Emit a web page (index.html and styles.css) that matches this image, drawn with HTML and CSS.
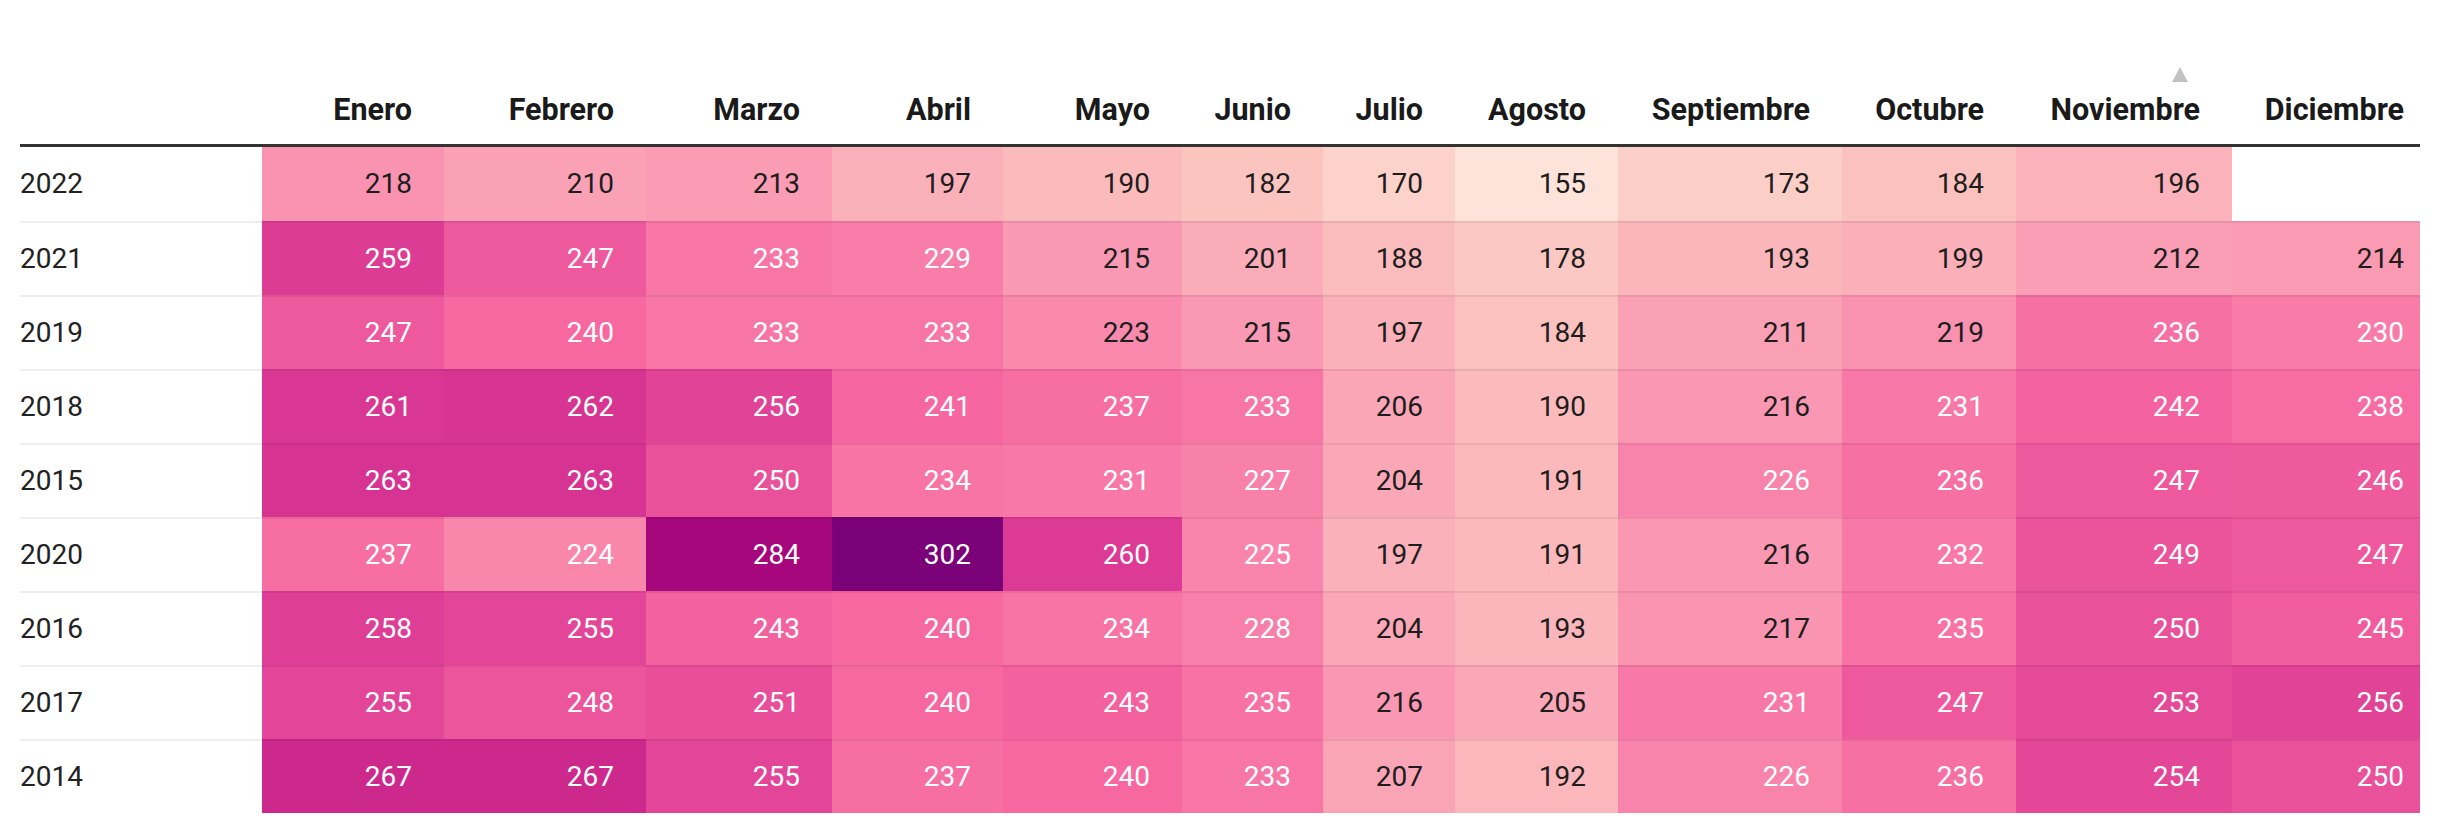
FILE: index.html
```html
<!DOCTYPE html>
<html lang="es">
<head>
<meta charset="utf-8">
<title>Tabla de calor</title>
<link rel="stylesheet" href="styles.css">
</head>
<body>
<div class="wrap">
  <table class="heat">
    <colgroup>
      <col class="c-year">
      <col class="c-ene">
      <col class="c-feb">
      <col class="c-mar">
      <col class="c-abr">
      <col class="c-may">
      <col class="c-jun">
      <col class="c-jul">
      <col class="c-ago">
      <col class="c-sep">
      <col class="c-oct">
      <col class="c-nov">
      <col class="c-dic">
    </colgroup>
    <thead>
      <tr>
        <th class="year"></th>
        <th>Enero</th>
        <th>Febrero</th>
        <th>Marzo</th>
        <th>Abril</th>
        <th>Mayo</th>
        <th>Junio</th>
        <th>Julio</th>
        <th>Agosto</th>
        <th>Septiembre</th>
        <th>Octubre</th>
        <th class="sorted">Noviembre<span class="sort-arrow"></span></th>
        <th>Diciembre</th>
      </tr>
    </thead>
    <tbody>
      <tr><td class="year">2022</td><td class="v">218</td><td class="v">210</td><td class="v">213</td><td class="v">197</td><td class="v">190</td><td class="v">182</td><td class="v">170</td><td class="v">155</td><td class="v">173</td><td class="v">184</td><td class="v">196</td><td class="v empty"></td></tr>
      <tr><td class="year">2021</td><td class="v">259</td><td class="v">247</td><td class="v">233</td><td class="v">229</td><td class="v">215</td><td class="v">201</td><td class="v">188</td><td class="v">178</td><td class="v">193</td><td class="v">199</td><td class="v">212</td><td class="v">214</td></tr>
      <tr><td class="year">2019</td><td class="v">247</td><td class="v">240</td><td class="v">233</td><td class="v">233</td><td class="v">223</td><td class="v">215</td><td class="v">197</td><td class="v">184</td><td class="v">211</td><td class="v">219</td><td class="v">236</td><td class="v">230</td></tr>
      <tr><td class="year">2018</td><td class="v">261</td><td class="v">262</td><td class="v">256</td><td class="v">241</td><td class="v">237</td><td class="v">233</td><td class="v">206</td><td class="v">190</td><td class="v">216</td><td class="v">231</td><td class="v">242</td><td class="v">238</td></tr>
      <tr><td class="year">2015</td><td class="v">263</td><td class="v">263</td><td class="v">250</td><td class="v">234</td><td class="v">231</td><td class="v">227</td><td class="v">204</td><td class="v">191</td><td class="v">226</td><td class="v">236</td><td class="v">247</td><td class="v">246</td></tr>
      <tr><td class="year">2020</td><td class="v">237</td><td class="v">224</td><td class="v">284</td><td class="v">302</td><td class="v">260</td><td class="v">225</td><td class="v">197</td><td class="v">191</td><td class="v">216</td><td class="v">232</td><td class="v">249</td><td class="v">247</td></tr>
      <tr><td class="year">2016</td><td class="v">258</td><td class="v">255</td><td class="v">243</td><td class="v">240</td><td class="v">234</td><td class="v">228</td><td class="v">204</td><td class="v">193</td><td class="v">217</td><td class="v">235</td><td class="v">250</td><td class="v">245</td></tr>
      <tr><td class="year">2017</td><td class="v">255</td><td class="v">248</td><td class="v">251</td><td class="v">240</td><td class="v">243</td><td class="v">235</td><td class="v">216</td><td class="v">205</td><td class="v">231</td><td class="v">247</td><td class="v">253</td><td class="v">256</td></tr>
      <tr><td class="year">2014</td><td class="v">267</td><td class="v">267</td><td class="v">255</td><td class="v">237</td><td class="v">240</td><td class="v">233</td><td class="v">207</td><td class="v">192</td><td class="v">226</td><td class="v">236</td><td class="v">254</td><td class="v">250</td></tr>
    </tbody>
  </table>
</div>
<script src="script.js"></script>
</body>
</html>
```

FILE: styles.css
```css
html, body {
  margin: 0;
  padding: 0;
  background: #ffffff;
}

body {
  font-family: Roboto, "Liberation Sans", sans-serif;
  color: #1d1d1d;
}

.wrap {
  padding: 0 20px;
}

.heat {
  table-layout: fixed;
  width: 2400px;
  border-collapse: separate;
  border-spacing: 0;
  font-size: 28px;
}

.c-year { width: 242px; }
.c-ene { width: 182px; }
.c-feb { width: 202px; }
.c-mar { width: 186px; }
.c-abr { width: 171px; }
.c-may { width: 179px; }
.c-jun { width: 141px; }
.c-jul { width: 132px; }
.c-ago { width: 163px; }
.c-sep { width: 224px; }
.c-oct { width: 174px; }
.c-nov { width: 216px; }
.c-dic { width: 188px; }

.heat th {
  font-size: 30.5px;
  font-weight: 700;
  text-align: right;
  vertical-align: bottom;
  line-height: 36px;
  padding: 92px 32px 16px 0;
  border-bottom: 3px solid #333333;
  color: #1a1a1a;
  white-space: nowrap;
}

.heat th:last-child,
.heat td:last-child {
  padding-right: 16px;
}

.heat th.year {
  padding-right: 0;
}

.heat th.sorted {
  position: relative;
}

.sort-arrow {
  position: absolute;
  top: 67px;
  right: 44px;
  width: 0;
  height: 0;
  border-left: 8px solid transparent;
  border-right: 8px solid transparent;
  border-bottom: 15px solid #c2c2c2;
}

.heat td {
  line-height: 72px;
  padding: 0 32px 0 0;
  text-align: right;
  white-space: nowrap;
  color: #1d1d1d;
}

.heat tbody tr:first-child td {
  line-height: 74px;
}

.heat tbody tr + tr td {
  border-top: 2px solid rgba(0, 0, 0, 0.065);
}

.heat td.year {
  text-align: left;
  padding: 0;
  color: #222222;
}

.heat td.light {
  color: #ffffff;
}
```

FILE: script.js
```js
(function () {
  var stops = [
    [155, [253, 227, 218]],
    [183.33, [251, 194, 190]],
    [211.67, [250, 159, 181]],
    [240, [247, 104, 161]],
    [260.67, [219, 56, 148]],
    [281.33, [174, 8, 126]],
    [302, [122, 1, 119]]
  ];

  function colorFor(v) {
    if (v <= stops[0][0]) return stops[0][1];
    for (var i = 1; i < stops.length; i++) {
      if (v <= stops[i][0]) {
        var a = stops[i - 1], b = stops[i];
        var t = (v - a[0]) / (b[0] - a[0]);
        return [0, 1, 2].map(function (k) {
          return Math.round(a[1][k] + (b[1][k] - a[1][k]) * t);
        });
      }
    }
    return stops[stops.length - 1][1];
  }

  var cells = document.querySelectorAll('.heat td.v');
  Array.prototype.forEach.call(cells, function (td) {
    var v = parseFloat(td.textContent);
    if (isNaN(v)) return;
    var c = colorFor(v);
    td.style.backgroundColor = 'rgb(' + c.join(',') + ')';
    if (v >= 224) td.classList.add('light');
  });
})();
```
